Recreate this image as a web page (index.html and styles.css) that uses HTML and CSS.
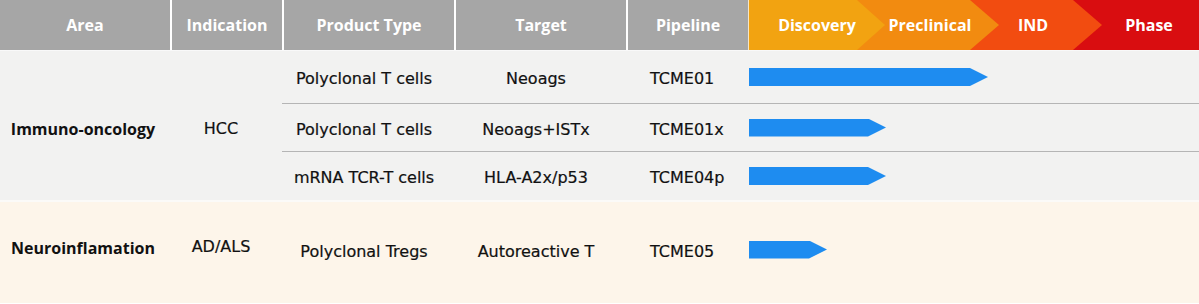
FILE: index.html
```html
<!DOCTYPE html>
<html lang="en">
<head>
<meta charset="utf-8">
<title>Pipeline</title>
<link rel="stylesheet" href="styles.css">
</head>
<body>
<div class="pipeline">
  <div class="head">
    <div class="hcell">Area</div>
    <div class="hcell">Indication</div>
    <div class="hcell">Product Type</div>
    <div class="hcell">Target</div>
    <div class="hcell">Pipeline</div>
    <div class="phases">
      <div class="phase phase-discovery">Discovery</div>
      <div class="phase phase-preclinical">Preclinical</div>
      <div class="phase phase-ind">IND</div>
      <div class="phase phase-final">Phase</div>
    </div>
  </div>

  <div class="group group-onco">
    <div class="area">Immuno-oncology</div>
    <div class="indication">HCC</div>
    <div class="rows">
      <div class="row">
        <div class="product">Polyclonal T cells</div>
        <div class="target">Neoags</div>
        <div class="code">TCME01</div>
        <div class="track"><div class="bar" style="width:239px"></div></div>
      </div>
      <div class="row">
        <div class="product">Polyclonal T cells</div>
        <div class="target">Neoags+ISTx</div>
        <div class="code">TCME01x</div>
        <div class="track"><div class="bar" style="width:137px"></div></div>
      </div>
      <div class="row">
        <div class="product">mRNA TCR-T cells</div>
        <div class="target">HLA-A2x/p53</div>
        <div class="code">TCME04p</div>
        <div class="track"><div class="bar" style="width:137px"></div></div>
      </div>
    </div>
  </div>

  <div class="group group-neuro">
    <div class="area">Neuroinflamation</div>
    <div class="indication">AD/ALS</div>
    <div class="rows">
      <div class="row row-single">
        <div class="product">Polyclonal Tregs</div>
        <div class="target">Autoreactive T</div>
        <div class="code">TCME05</div>
        <div class="track"><div class="bar" style="width:78px"></div></div>
      </div>
    </div>
  </div>
</div>
</body>
</html>
```

FILE: styles.css
```css
* { box-sizing: border-box; }

html, body {
  margin: 0;
  padding: 0;
  background: #ffffff;
}

body {
  font-family: "DejaVu Sans", "Noto Sans CJK KR", sans-serif;
  color: #111111;
  width: 1199px;
  height: 304px;
  overflow: hidden;
}

/* header strip */
.head {
  display: grid;
  grid-template-columns: 170px 112px 172px 172px 122px 1fr;
  height: 50px;
  background: #a6a6a6;
  border-bottom: 1px solid #f9f9f9;
  box-sizing: content-box;
  font-family: "Open Sans", sans-serif;
}

.hcell {
  display: flex;
  align-items: center;
  justify-content: center;
  color: #ffffff;
  font-weight: 700;
  font-size: 16px;
  border-left: 2px solid #ffffff;
}

.hcell:first-child { border-left: none; }

.phases {
  display: flex;
  border-left: 1px solid #f5e6c8;
  height: 50px;
}

.phase {
  position: relative;
  display: flex;
  align-items: center;
  justify-content: center;
  color: #ffffff;
  font-weight: 700;
  font-size: 16px;
  height: 50px;
  clip-path: polygon(0 0, calc(100% - 29px) 0, 100% 50%, calc(100% - 29px) 100%, 0 100%);
  margin-right: -29px;
}

.phase-discovery   { width: 136px; background: #f2a311; z-index: 4; clip-path: polygon(0 0, calc(100% - 28px) 0, 100% 50%, calc(100% - 28px) 100%, 0 100%); margin-right: -28px; }
.phase-preclinical { width: 142px; background: #f28b10; z-index: 3; padding-left: 4px; }
.phase-ind         { width: 132px; background: #f24c10; z-index: 2; padding-right: 6px; }
.phase-final       { flex: 1; background: #d90d10; z-index: 1; clip-path: none; margin-right: 0; padding-left: 26px; }

/* body groups */
.group {
  display: flex;
  font-size: 16px;
}

.group-onco {
  background: #f2f2f1;
  border-bottom: 2px solid #fbfaf8;
}

.group-neuro {
  background: #fdf5ea;
  height: 101px;
}

.area {
  width: 170px;
  display: flex;
  align-items: center;
  justify-content: center;
  font-family: "Open Sans", sans-serif;
  font-weight: 700;
  font-size: 16px;
  padding-right: 4px;
}

.indication {
  width: 112px;
  display: flex;
  align-items: center;
  justify-content: center;
  padding-right: 10px;
}

.group-onco .area { padding-top: 6px; }
.group-onco .indication { padding-top: 5px; }
.group-neuro .area { padding-bottom: 9px; }
.group-neuro .indication { padding-bottom: 12px; }

.rows {
  flex: 1;
  display: flex;
  flex-direction: column;
}

.row {
  display: grid;
  grid-template-columns: 172px 172px 122px 1fr;
  align-items: center;
  height: 48px;
  border-bottom: 1px solid #b5b5b5;
}

.row:first-child { height: 53px; }
.row:last-child { border-bottom: none; height: 48px; }

.row-single,
.row-single:first-child {
  height: 100%;
  padding-bottom: 6px;
}

.product,
.target,
.code,
.indication {
  -webkit-text-stroke: 0.2px #111111;
}

.product,
.target {
  text-align: center;
  padding-right: 8px;
  padding-top: 3px;
}

.code {
  padding-left: 24px;
  padding-top: 3px;
}

.track {
  display: flex;
  align-items: center;
  padding-left: 1px;
}

.bar {
  height: 18px;
  background: #1e8cf0;
  clip-path: polygon(0 0, calc(100% - 18px) 0, 100% 50%, calc(100% - 18px) 100%, 0 100%);
}
```
